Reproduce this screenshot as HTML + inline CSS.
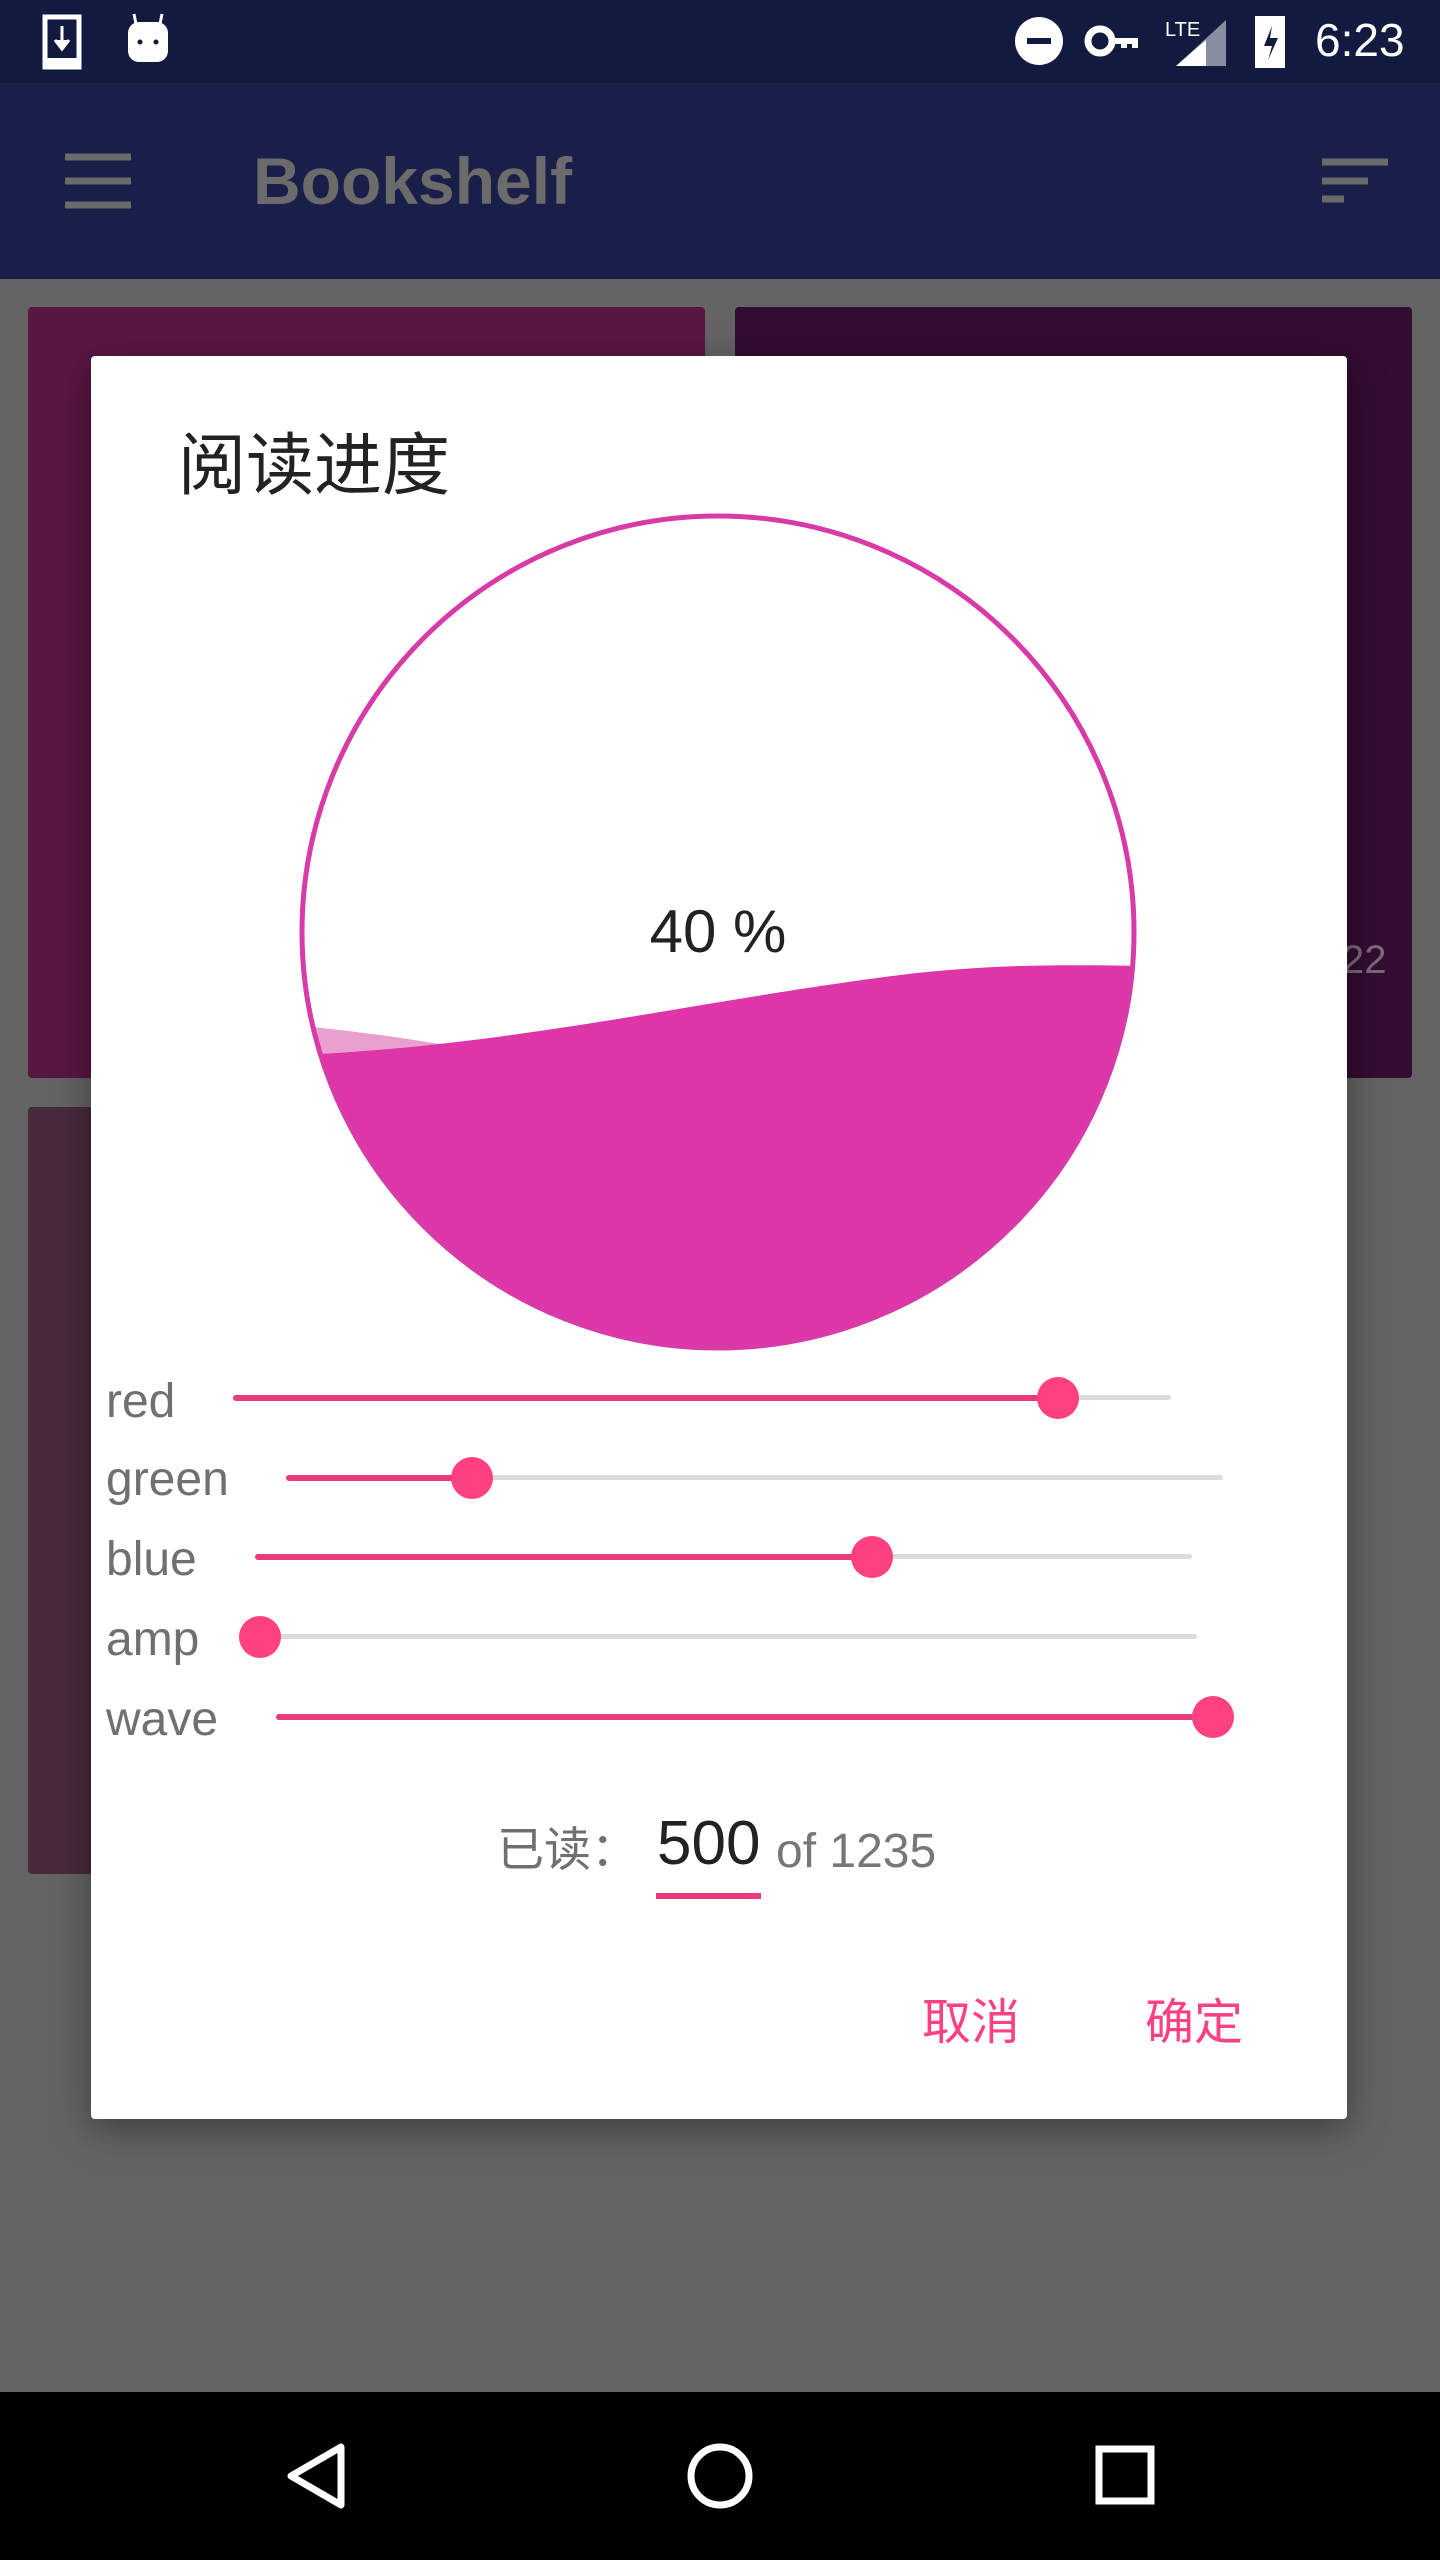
<!DOCTYPE html>
<html><head><meta charset="utf-8"><style>
*{margin:0;padding:0;box-sizing:border-box}
body{width:1440px;height:2560px;position:relative;overflow:hidden;background:#646464;font-family:"Liberation Sans","Noto Sans CJK SC",sans-serif}
.abs{position:absolute}
.lbl{position:absolute;left:106px;font-size:48px;color:#707070;line-height:1}
.tr{position:absolute;height:5px;background:#dcdcdc;border-radius:3px}
.ac{position:absolute;height:6px;background:#ea3a7a;border-radius:3px}
.th{position:absolute;width:42px;height:42px;border-radius:50%;background:#ff4081}
</style></head><body>
<div class="abs" style="left:0;top:0;width:1440px;height:83px;background:#121a40"></div>
<svg class="abs" style="left:0;top:0" width="1440" height="83">
<rect x="45" y="17" width="34" height="50" fill="none" stroke="#fff" stroke-width="5"/><rect x="45" y="58" width="34" height="9" fill="#fff"/><path d="M62 26v22M55 40l7 9 7-9" stroke="#fff" stroke-width="3" fill="#fff"/>
<rect x="128" y="22" width="40" height="40" rx="11" fill="#fff"/><path d="M136 24l-2-10M160 24l2-10" stroke="#fff" stroke-width="3"/><circle cx="140" cy="42" r="2.5" fill="#121a40"/><circle cx="156" cy="42" r="2.5" fill="#121a40"/>
<circle cx="1039" cy="41" r="24" fill="#fff"/><rect x="1027" y="38" width="24" height="6" fill="#121a40"/>
<circle cx="1100" cy="41" r="12" fill="none" stroke="#fff" stroke-width="7"/><path d="M1110 38h28v10h-6v-4h-5v4h-6v-4h-11z" fill="#fff"/>
<text x="1165" y="36" fill="#fff" font-size="20" font-family="Liberation Sans">LTE</text>
<path d="M1176 66L1226 20V66z" fill="#fff" opacity=".5"/><path d="M1176 66L1206 40V66z" fill="#fff"/>
<rect x="1255" y="16" width="30" height="52" fill="#fff"/><path d="M1272 26l-8 20h8l-4 14 10-22h-8z" fill="#121a40"/>
<text x="1315" y="56" fill="#fff" font-size="46" font-family="Liberation Sans">6:23</text>
</svg>
<div class="abs" style="left:0;top:83px;width:1440px;height:196px;background:#191f48"></div>
<svg class="abs" style="left:0;top:83px" width="1440" height="196">
<path d="M65 74h66M65 98h66M65 122h66" stroke="#6a6a6a" stroke-width="7"/>
<path d="M1322 79h66M1322 98h46M1322 116h22" stroke="#6a6a6a" stroke-width="7"/>
</svg>
<div class="abs" style="left:253px;top:148px;font-size:66px;color:#6b6b6b;font-weight:bold;line-height:1">Bookshelf</div>
<div class="abs" style="left:28px;top:307px;width:677px;height:771px;background:#5a1642;border-radius:4px"></div>
<div class="abs" style="left:735px;top:307px;width:677px;height:771px;background:#330c32;border-radius:4px"></div>
<div class="abs" style="left:1342px;top:938px;font-size:40px;color:#7a6a7a">22</div>
<div class="abs" style="left:28px;top:1107px;width:677px;height:767px;background:#482a3c;border-radius:4px"></div>
<div class="abs" style="left:91px;top:356px;width:1256px;height:1763px;background:#fff;border-radius:4px;box-shadow:0 10px 40px rgba(0,0,0,.4)"></div>
<div class="abs" style="left:178px;top:432px;font-size:68px;color:#222;line-height:1">阅读进度</div>
<svg class="abs" style="left:0;top:0" width="1440" height="1400">
<defs><clipPath id="c"><circle cx="718" cy="932" r="416"/></clipPath></defs>
<g clip-path="url(#c)">
<path d="M290 1025 C 350 1030, 420 1040, 460 1048 L 460 1400 L 290 1400Z" fill="#eaa0cf"/>
<path d="M300 1055 C 520 1045, 700 1000, 900 975 C 1000 963, 1080 965, 1150 966 L 1150 1400 L 300 1400 Z" fill="#de35a8"/>
</g>
<circle cx="718" cy="932" r="416" fill="none" stroke="#d83aa8" stroke-width="5"/>
<text x="718" y="952" text-anchor="middle" font-size="60" fill="#222" font-family="Liberation Sans">40 %</text>
</svg>
<div class="lbl" style="top:1378px">red</div>
<div class="tr" style="left:233px;top:1395px;width:938px"></div><div class="ac" style="left:233px;top:1395px;width:825px"></div><div class="th" style="left:1037px;top:1377px"></div>
<div class="lbl" style="top:1456px">green</div>
<div class="tr" style="left:286px;top:1475px;width:937px"></div><div class="ac" style="left:286px;top:1475px;width:186px"></div><div class="th" style="left:451px;top:1457px"></div>
<div class="lbl" style="top:1536px">blue</div>
<div class="tr" style="left:255px;top:1554px;width:937px"></div><div class="ac" style="left:255px;top:1554px;width:617px"></div><div class="th" style="left:851px;top:1536px"></div>
<div class="lbl" style="top:1616px">amp</div>
<div class="tr" style="left:260px;top:1634px;width:937px"></div><div class="th" style="left:239px;top:1616px"></div>
<div class="lbl" style="top:1696px">wave</div>
<div class="tr" style="left:276px;top:1714px;width:937px"></div><div class="ac" style="left:276px;top:1714px;width:937px"></div><div class="th" style="left:1192px;top:1696px"></div>
<div class="abs" style="left:497px;top:1826px;font-size:47px;color:#707070;line-height:1">已读：</div>
<div class="abs" style="left:657px;top:1813px;font-size:62px;color:#222;line-height:1">500</div>
<div class="abs" style="left:776px;top:1828px;font-size:48px;color:#777;line-height:1">of 1235</div>
<div class="abs" style="left:656px;top:1893px;width:105px;height:6px;background:#ea3a7a"></div>
<div class="abs" style="left:922px;top:1999px;font-size:49px;color:#ff4081;line-height:1">取消</div>
<div class="abs" style="left:1145px;top:1999px;font-size:49px;color:#ff4081;line-height:1">确定</div>
<div class="abs" style="left:0;top:2392px;width:1440px;height:168px;background:#000"></div>
<svg class="abs" style="left:0;top:2392px" width="1440" height="168">
<path d="M341 55L291 84L341 113Z" fill="none" stroke="#fff" stroke-width="7" stroke-linejoin="round"/>
<circle cx="720" cy="84" r="29" fill="none" stroke="#fff" stroke-width="7"/>
<rect x="1099" y="57" width="52" height="52" fill="none" stroke="#fff" stroke-width="7"/>
</svg>
</body></html>
